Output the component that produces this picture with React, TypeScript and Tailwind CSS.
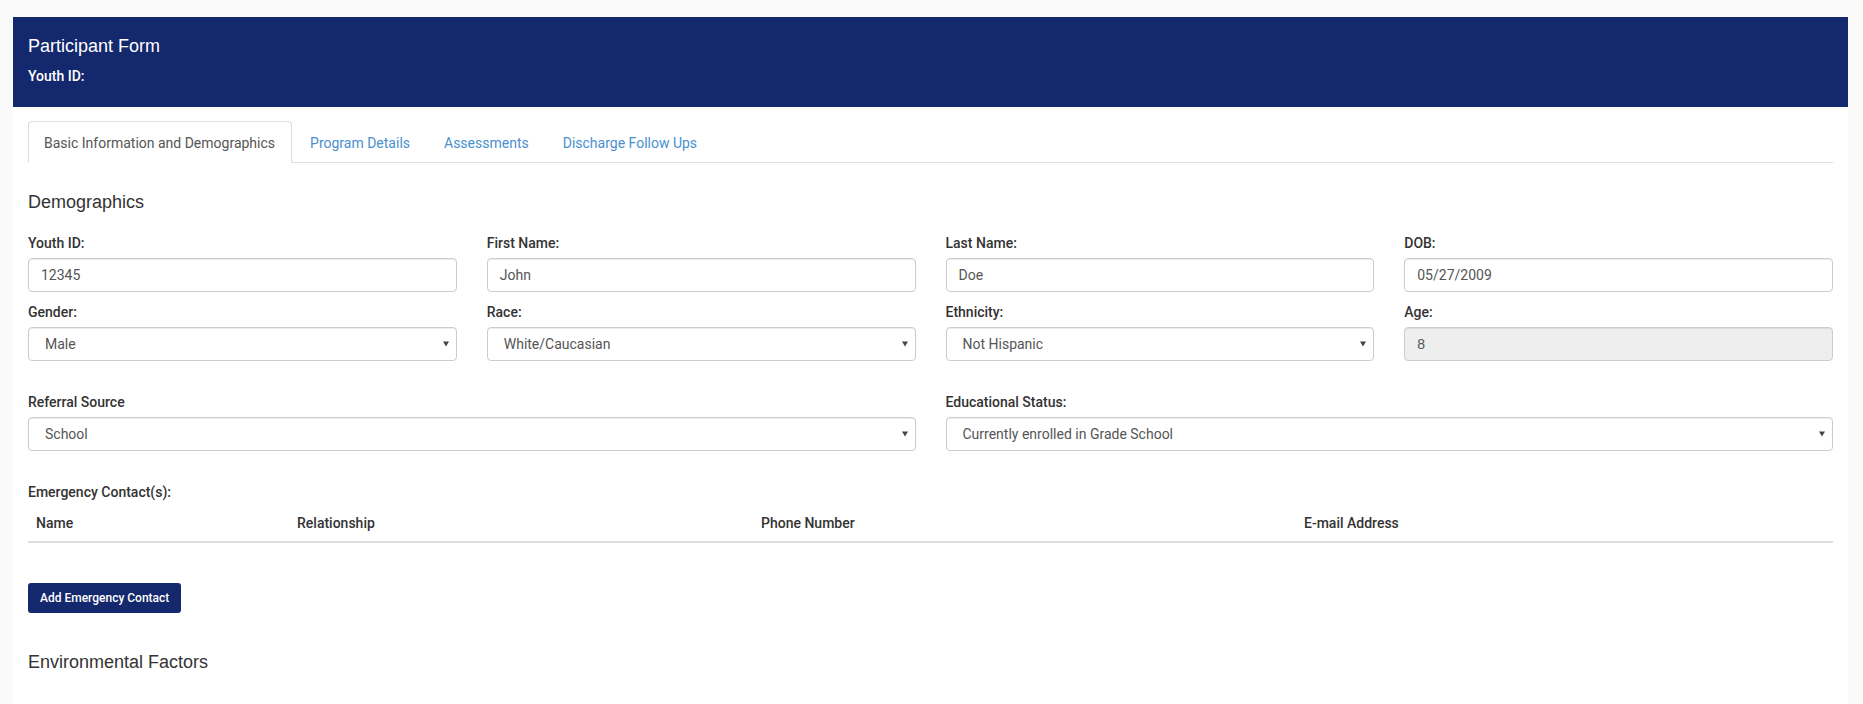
import React from "react";

const body = "font-['Roboto',_'Open_Sans',_sans-serif]";
const heading = "font-['Liberation_Sans',_Arial,_sans-serif]";

function Label({ children }: { children: React.ReactNode }) {
  return (
    <div className="mb-[5px] text-[14px] leading-[20px] font-medium text-[#333]">
      {children}
    </div>
  );
}

function TextInput({ value, disabled, arial }: { value: string; disabled?: boolean; arial?: boolean }) {
  return (
    <div
      className={
        "flex h-[34px] items-center rounded-[4px] border border-[#ccc] px-[12px] text-[14px] text-[#555] shadow-[inset_0_1px_1px_rgba(0,0,0,0.075)] " +
        (disabled ? "bg-[#eee] " : "bg-white ") +
        (arial ? heading : "")
      }
    >
      {value}
    </div>
  );
}

function Select({ value }: { value: string }) {
  return (
    <div className="flex h-[34px] items-center justify-between rounded-[4px] border border-[#ccc] bg-white pl-[16px] pr-[7px] text-[14px] text-[#555] shadow-[inset_0_1px_1px_rgba(0,0,0,0.075)]">
      <span>{value}</span>
      <svg width="6" height="6" viewBox="0 0 6 6" className="shrink-0">
        <polygon points="0,0.5 6,0.5 3,5.5" fill="#444" />
      </svg>
    </div>
  );
}

function Field({ label, children }: { label: string; children: React.ReactNode }) {
  return (
    <div>
      <Label>{label}</Label>
      {children}
    </div>
  );
}

export default function App() {
  const tabs = ["Basic Information and Demographics", "Program Details", "Assessments", "Discharge Follow Ups"];
  return (
    <div className={"min-h-[704px] bg-[#fafafa] pt-[17px] pl-[13px] pr-[15px] " + body}>
      <div className="h-[90px] bg-[#14286d] px-[15px] pt-[19px]">
        <div className={heading + " text-[18px] leading-[20px] text-white"}>Participant Form</div>
        <div className="mt-[10px] text-[14px] leading-[20px] font-medium text-white">Youth ID:</div>
      </div>
      <div className="min-h-[700px] bg-white px-[15px] pt-[14px]">
        <div className="flex border-b border-[#ddd]">
          {tabs.map((t, i) => (
            <div
              key={t}
              className={
                "-mb-px mr-[2px] rounded-t-[4px] border px-[15px] pt-[11px] pb-[9px] text-[14px] leading-[20px] " +
                (i === 0
                  ? "border-[#ddd] border-b-white bg-white pr-[16px] text-[#555]"
                  : "border-transparent text-[#4a8fcf]")
              }
            >
              {t}
            </div>
          ))}
        </div>

        <div className={heading + " mt-[29px] text-[18px] leading-[20px] text-[#333]"}>Demographics</div>

        <div className="mt-[21px] grid grid-cols-4 gap-x-[30px] gap-y-[10px]">
          <Field label="Youth ID:">
            <TextInput value="12345" />
          </Field>
          <Field label="First Name:">
            <TextInput value="John" />
          </Field>
          <Field label="Last Name:">
            <TextInput value="Doe" />
          </Field>
          <Field label="DOB:">
            <TextInput value="05/27/2009" />
          </Field>
          <Field label="Gender:">
            <Select value="Male" />
          </Field>
          <Field label="Race:">
            <Select value="White/Caucasian" />
          </Field>
          <Field label="Ethnicity:">
            <Select value="Not Hispanic" />
          </Field>
          <Field label="Age:">
            <TextInput value="8" disabled arial />
          </Field>
        </div>

        <div className="mt-[31px] grid grid-cols-2 gap-x-[30px]">
          <Field label="Referral Source">
            <Select value="School" />
          </Field>
          <Field label="Educational Status:">
            <Select value="Currently enrolled in Grade School" />
          </Field>
        </div>

        <div className="mt-[31px]">
          <Label>Emergency Contact(s):</Label>
        </div>
        <div className="mt-[-2px] grid grid-cols-[261px_464px_543px_1fr] border-b-2 border-[#ddd] text-[14px] leading-[20px] font-medium text-[#333]">
          <div className="p-[8px]">Name</div>
          <div className="p-[8px]">Relationship</div>
          <div className="p-[8px]">Phone Number</div>
          <div className="p-[8px]">E-mail Address</div>
        </div>

        <div className="mt-[40px]">
          <button className="h-[30px] rounded-[3px] bg-[#14286d] px-[12px] text-[12px] font-medium text-white">
            Add Emergency Contact
          </button>
        </div>

        <div className={heading + " mt-[39px] text-[18px] leading-[20px] text-[#333]"}>Environmental Factors</div>
      </div>
    </div>
  );
}
